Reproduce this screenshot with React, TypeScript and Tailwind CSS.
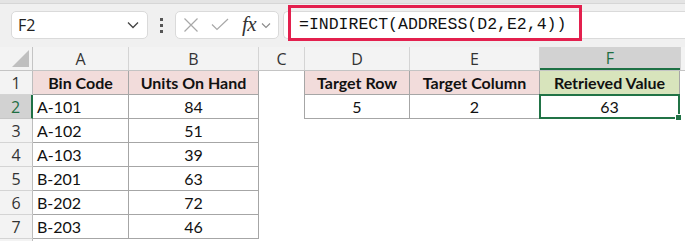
import React from "react";

const cols = [
  { key: "A", w: "w-[96px]" },
  { key: "B", w: "w-[130px]" },
  { key: "C", w: "w-[46px]" },
  { key: "D", w: "w-[105px]" },
  { key: "E", w: "w-[130px]" },
  { key: "F", w: "w-[140px]" },
];

const dataRows: [string, string][] = [
  ["A-101", "84"],
  ["A-102", "51"],
  ["A-103", "39"],
  ["B-201", "63"],
  ["B-202", "72"],
  ["B-203", "46"],
];

const cellFont = "font-['Lato','Liberation_Sans',sans-serif] text-[16px] text-[#111]";
const uiFont = "font-['Open_Sans','Noto_Sans',sans-serif]";

function RowHeader({ n, selected }: { n?: number; selected?: boolean }) {
  return selected ? (
    <div className={`w-[33px] h-full shrink-0 flex items-center justify-center bg-[#d2d2d2] border-r-2 border-r-[#1e7145] border-b border-b-[#c6c6c6] text-[16px] text-[#1e6e42] ${uiFont}`}>
      {n}
    </div>
  ) : (
    <div className={`w-[33px] h-full shrink-0 flex items-center justify-center bg-[#f3f3f3] border-r border-r-[#bdbdbd] border-b border-b-[#d4d4d4] text-[16px] text-[#333] ${uiFont}`}>
      {n}
    </div>
  );
}

export default function App() {
  return (
    <div className="w-[685px] h-[241px] overflow-hidden bg-white relative">
      {/* top strip */}
      <div className="h-[4px] bg-[#e4e4e4] border-b border-b-[#d6d6d6]" />
      {/* toolbar */}
      <div className="h-[43px] bg-[#f0f0f0] flex items-start pt-[7px] pl-[11px]">
        <div className={`w-[137px] h-[28px] bg-white rounded-[5px] border border-[#dadada] flex items-center justify-between pl-[6px] pr-[8px] ${uiFont} text-[16px] text-[#222]`}>
          <span>F2</span>
          <svg width="12" height="8" viewBox="0 0 12 8">
            <path d="M1 1.5 L6 6.5 L11 1.5" fill="none" stroke="#444" strokeWidth="1.3" />
          </svg>
        </div>
        <div className="w-[27px] h-[28px] flex flex-col items-center justify-center gap-[3px]">
          <div className="w-[3px] h-[3px] bg-[#555]" />
          <div className="w-[3px] h-[3px] bg-[#555]" />
          <div className="w-[3px] h-[3px] bg-[#555]" />
        </div>
        <div className="w-[104px] h-[28px] bg-white rounded-[5px] border border-[#dadada] flex items-center pl-[7px]">
          <svg width="16" height="16" viewBox="0 0 16 16">
            <path d="M1.5 1.5 L14.5 14.5 M14.5 1.5 L1.5 14.5" stroke="#a8a8a8" strokeWidth="1.2" fill="none" />
          </svg>
          <svg width="18" height="14" viewBox="0 0 18 14" className="ml-[12px]">
            <path d="M1 6.5 L6 11.5 L17 1" stroke="#a8a8a8" strokeWidth="1.2" fill="none" />
          </svg>
          <span className="ml-[13px] font-['Liberation_Serif',serif] italic text-[21px] leading-none text-[#333] tracking-[-0.5px] -mt-[2px]">fx</span>
          <svg width="10" height="7" viewBox="0 0 10 7" className="ml-[5px]">
            <path d="M1 1.5 L5 5.5 L9 1.5" fill="none" stroke="#8a8a8a" strokeWidth="1.1" />
          </svg>
        </div>
        <div className="ml-[4px] flex-1 h-[28px] bg-white border border-[#dadada] border-r-0 rounded-l-[5px] flex items-center pl-[15px]">
          <span className="font-['Liberation_Mono',monospace] text-[16.5px] text-[#111] leading-none">=INDIRECT(ADDRESS(D2,E2,4))</span>
        </div>
      </div>
      {/* red annotation */}
      <div className="absolute left-[288px] top-[5px] w-[294px] h-[36px] border-[3px] border-[#e3204e] pointer-events-none" />

      {/* column header row */}
      <div className="h-[24px] flex bg-[#f3f3f3] border-b border-b-[#c4c4c4]">
        <div className="w-[33px] h-full shrink-0 border-r border-r-[#c4c4c4] relative flex items-end justify-end pr-[3px] pb-[3px]">
          <svg width="17" height="17" viewBox="0 0 17 17">
            <path d="M17 0 L17 17 L0 17 Z" fill="#bfbfbf" />
          </svg>
        </div>
        {cols.map((c) =>
          c.key === "F" ? (
            <div key={c.key} className={`${c.w} h-full shrink-0 bg-[#d2d2d2] border-b-2 border-b-[#1e7145] flex items-center justify-center text-[16px] text-[#1e6e42] ${uiFont}`}>
              {c.key}
            </div>
          ) : (
            <div key={c.key} className={`${c.w} h-full shrink-0 border-r border-r-[#d4d4d4] flex items-center justify-center text-[16px] text-[#333] ${uiFont}`}>
              {c.key}
            </div>
          )
        )}
        <div className="flex-1 border-l border-l-[#d4d4d4]" />
      </div>

      {/* row 1 */}
      <div className="h-[24px] flex">
        <RowHeader n={1} />
        <div className={`w-[96px] shrink-0 h-full bg-[#f2dcdb] border-r border-b border-[#a6a6a6] flex items-center justify-center font-bold ${cellFont}`}>Bin Code</div>
        <div className={`w-[130px] shrink-0 h-full bg-[#f2dcdb] border-r border-b border-[#a6a6a6] flex items-center justify-center font-bold ${cellFont}`}>Units On Hand</div>
        <div className="w-[46px] shrink-0 h-full border-r border-[#a6a6a6]" />
        <div className={`w-[105px] shrink-0 h-full bg-[#f2dcdb] border-r border-b border-[#a6a6a6] flex items-center justify-center font-bold ${cellFont}`}>Target Row</div>
        <div className={`w-[130px] shrink-0 h-full bg-[#f2dcdb] border-r border-b border-[#a6a6a6] flex items-center justify-center font-bold ${cellFont}`}>Target Column</div>
        <div className={`w-[140px] shrink-0 h-full bg-[#d8e4bc] border-r border-b border-[#a6a6a6] flex items-center justify-center font-bold ${cellFont}`}>Retrieved Value</div>
      </div>

      {/* row 2 */}
      <div className="h-[24px] flex">
        <RowHeader n={2} selected />
        <div className={`w-[96px] shrink-0 h-full border-r border-b border-[#a6a6a6] flex items-center pl-[4px] ${cellFont}`}>A-101</div>
        <div className={`w-[130px] shrink-0 h-full border-r border-b border-[#a6a6a6] flex items-center justify-center ${cellFont}`}>84</div>
        <div className="w-[46px] shrink-0 h-full border-r border-[#a6a6a6]" />
        <div className={`w-[105px] shrink-0 h-full border-r border-b border-[#a6a6a6] flex items-center justify-center ${cellFont}`}>5</div>
        <div className={`w-[130px] shrink-0 h-full border-r border-b border-[#a6a6a6] flex items-center justify-center ${cellFont}`}>2</div>
        <div className={`w-[140px] shrink-0 h-full relative border-r border-b border-[#a6a6a6] flex items-center justify-center ${cellFont}`}>
          63
          <div className="absolute left-[-1px] top-[-1px] right-[-1px] bottom-[-1px] border-2 border-[#217346]" />
          <div className="absolute right-[-3px] bottom-[-3px] w-[5px] h-[5px] bg-[#217346] border border-white box-content" />
        </div>
      </div>

      {dataRows.slice(1).map(([code, units], i) => (
        <div key={code} className="h-[24px] flex">
          <RowHeader n={i + 3} />
          <div className={`w-[96px] shrink-0 h-full border-r border-b border-[#a6a6a6] flex items-center pl-[4px] ${cellFont}`}>{code}</div>
          <div className={`w-[130px] shrink-0 h-full border-r border-b border-[#a6a6a6] flex items-center justify-center ${cellFont}`}>{units}</div>
        </div>
      ))}
      <div className="h-[24px] flex">
        <RowHeader />
      </div>
    </div>
  );
}
